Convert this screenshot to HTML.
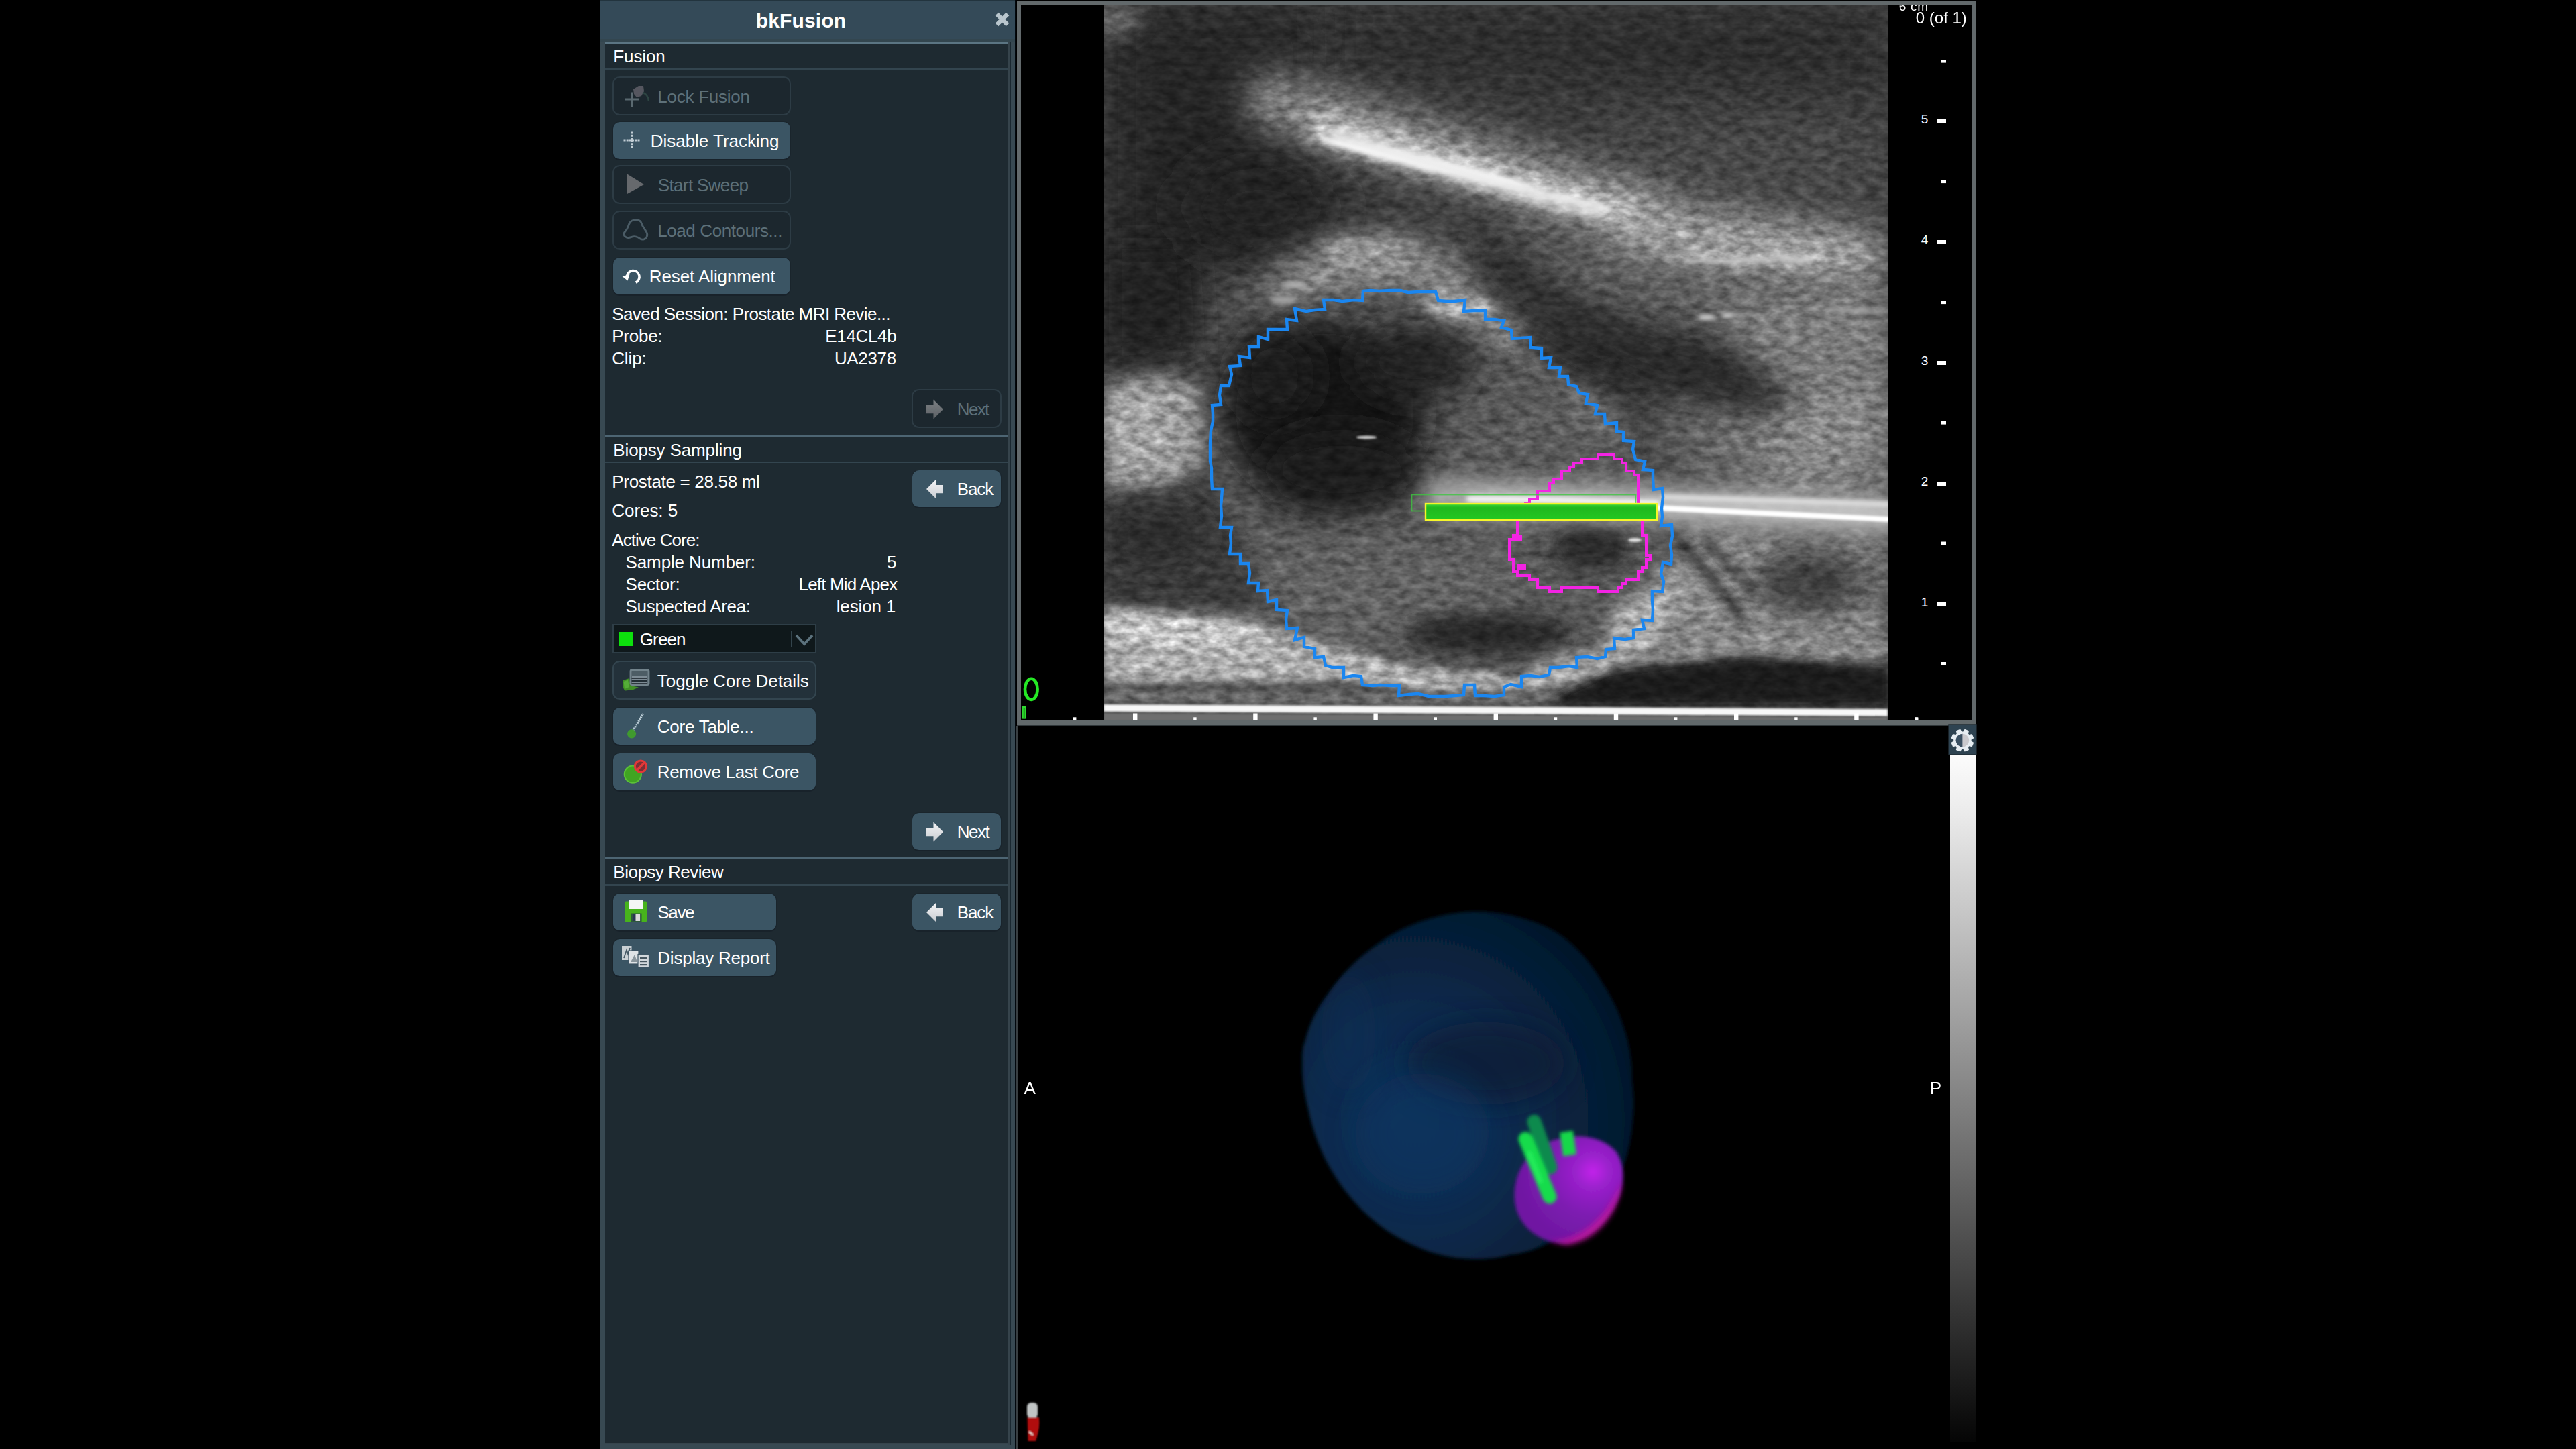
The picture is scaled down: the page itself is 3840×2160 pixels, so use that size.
<!DOCTYPE html>
<html><head><meta charset="utf-8"><title>bkFusion</title>
<style>
html,body{margin:0;padding:0;background:#000;}
body{width:3840px;height:2160px;position:relative;overflow:hidden;font-family:"Liberation Sans",sans-serif;}
.t{position:absolute;white-space:nowrap;line-height:1;}
.b{position:absolute;box-sizing:content-box;}
svg{position:absolute;overflow:visible;}
</style></head><body>
<div id="root" style="position:absolute;left:0;top:0;width:3840px;height:2160px;filter:blur(0.6px);">
<div class="b" style="left:894px;top:0px;width:619px;height:2160px;background:#384952;"></div>
<div class="b" style="left:894px;top:0px;width:619px;height:58px;background:#344a58;"></div>
<div class="b" style="left:894px;top:58px;width:619px;height:4px;background:#33464f;"></div>
<div class="b" style="left:894px;top:0px;width:619px;height:2px;background:#22343e;"></div>
<div class="b" style="left:1513px;top:0px;width:2px;height:2160px;background:#01070c;"></div>
<div class="b" style="left:902px;top:62px;width:602px;height:3px;background:#5b7583;"></div>
<div class="b" style="left:902px;top:65px;width:601px;height:2086px;background:#1e2a31;"></div>
<div class="b" style="left:1503px;top:62px;width:2px;height:2092px;background:#36444c;"></div>
<div class="b" style="left:1505px;top:62px;width:2px;height:2092px;background:#1a2830;"></div>
<div class="b" style="left:902px;top:2151px;width:603px;height:2px;background:#36444c;"></div>
<div class="t" style="left:1126.8px;top:16.1px;font-size:30px;color:#fff;letter-spacing:0.143px;font-weight:bold;">bkFusion</div>
<svg class="b" style="left:1482px;top:17px" width="24" height="24" viewBox="0 0 24 24"><path d="M4 4 L20 20 M20 4 L4 20" stroke="#b9c6cd" stroke-width="6.5" stroke-linecap="butt"/></svg>
<div class="t" style="left:914.3px;top:71.0px;font-size:26px;color:#fff;letter-spacing:-0.120px;">Fusion</div>
<div class="b" style="left:902px;top:102px;width:601px;height:2px;background:#33454f;"></div>
<div class="b" style="left:902px;top:648px;width:601px;height:3px;background:#4d6573;"></div>
<div class="t" style="left:914.3px;top:657.6px;font-size:26px;color:#fff;letter-spacing:-0.143px;">Biopsy Sampling</div>
<div class="b" style="left:902px;top:688px;width:601px;height:2px;background:#33454f;"></div>
<div class="b" style="left:902px;top:1277px;width:601px;height:3px;background:#4d6573;"></div>
<div class="t" style="left:914.3px;top:1287.3px;font-size:26px;color:#fff;letter-spacing:-0.500px;">Biopsy Review</div>
<div class="b" style="left:902px;top:1318px;width:601px;height:2px;background:#33454f;"></div>
<div class="b" style="left:913px;top:114px;width:262px;height:54px;background:#1c272e;border:2px solid #2d3c45;border-radius:11px;"></div>
<div class="t" style="left:980.2px;top:131.0px;font-size:26px;color:#5d7079;letter-spacing:-0.240px;">Lock Fusion</div>
<div class="b" style="left:913px;top:181px;width:264px;height:55px;background:#3b5564;border:1px solid #1a252c;border-bottom:2px solid #18222a;border-radius:11px;"></div>
<div class="t" style="left:969.8px;top:197.0px;font-size:26px;color:#fff;letter-spacing:-0.033px;">Disable Tracking</div>
<div class="b" style="left:913px;top:246px;width:262px;height:54px;background:#1c272e;border:2px solid #2d3c45;border-radius:11px;"></div>
<div class="t" style="left:980.8px;top:263.0px;font-size:26px;color:#5d7079;letter-spacing:-0.650px;">Start Sweep</div>
<div class="b" style="left:913px;top:314px;width:262px;height:54px;background:#1c272e;border:2px solid #2d3c45;border-radius:11px;"></div>
<div class="t" style="left:980.2px;top:331.0px;font-size:26px;color:#5d7079;letter-spacing:-0.400px;">Load Contours...</div>
<div class="b" style="left:913px;top:383px;width:264px;height:55px;background:#3b5564;border:1px solid #1a252c;border-bottom:2px solid #18222a;border-radius:11px;"></div>
<div class="t" style="left:967.8px;top:399.0px;font-size:26px;color:#fff;letter-spacing:-0.093px;">Reset Alignment</div>
<div class="t" style="left:912.2px;top:454.6px;font-size:26px;color:#fff;letter-spacing:-0.563px;">Saved Session: Prostate MRI Revie...</div>
<div class="t" style="left:912.2px;top:487.6px;font-size:26px;color:#fff;letter-spacing:-0.231px;">Probe:</div>
<div class="t" style="left:1230.3px;top:487.6px;font-size:26px;color:#fff;letter-spacing:-0.337px;">E14CL4b</div>
<div class="t" style="left:912.2px;top:520.7px;font-size:26px;color:#fff;letter-spacing:-0.114px;">Clip:</div>
<div class="t" style="left:1243.9px;top:520.7px;font-size:26px;color:#fff;letter-spacing:-0.326px;">UA2378</div>
<div class="b" style="left:1359px;top:580px;width:130px;height:54px;background:#1c272e;border:2px solid #2d3c45;border-radius:11px;"></div>
<div class="t" style="left:1426.8px;top:597.0px;font-size:26px;color:#5d7079;letter-spacing:-1.667px;">Next</div>
<div class="b" style="left:1359px;top:700px;width:132px;height:55px;background:#3b5564;border:1px solid #1a252c;border-bottom:2px solid #18222a;border-radius:11px;"></div>
<div class="t" style="left:1426.8px;top:716.0px;font-size:26px;color:#fff;letter-spacing:-1.133px;">Back</div>
<div class="t" style="left:912.3px;top:705.0px;font-size:26px;color:#fff;letter-spacing:-0.311px;">Prostate = 28.58 ml</div>
<div class="t" style="left:912.3px;top:748.0px;font-size:26px;color:#fff;letter-spacing:-0.057px;">Cores: 5</div>
<div class="t" style="left:912.3px;top:792.0px;font-size:26px;color:#fff;letter-spacing:-0.955px;">Active Core:</div>
<div class="t" style="left:932.6px;top:824.8px;font-size:26px;color:#fff;letter-spacing:-0.138px;">Sample Number:</div>
<div class="t" style="left:1322.0px;top:824.8px;font-size:26px;color:#fff;">5</div>
<div class="t" style="left:932.6px;top:857.7px;font-size:26px;color:#fff;letter-spacing:-0.216px;">Sector:</div>
<div class="t" style="left:1190.6px;top:857.7px;font-size:26px;color:#fff;letter-spacing:-0.833px;">Left Mid Apex</div>
<div class="t" style="left:932.6px;top:890.5px;font-size:26px;color:#fff;letter-spacing:-0.311px;">Suspected Area:</div>
<div class="t" style="left:1246.7px;top:890.5px;font-size:26px;color:#fff;letter-spacing:-0.143px;">lesion 1</div>
<div class="b" style="left:913px;top:930px;width:300px;height:40px;background:#0f181b;border:2px solid #2e3e47;"></div>
<div class="b" style="left:923px;top:942px;width:21px;height:21px;background:#0de00d;"></div>
<div class="t" style="left:953.8px;top:940.4px;font-size:26px;color:#fff;letter-spacing:-0.900px;">Green</div>
<div class="b" style="left:1179px;top:941px;width:2px;height:23px;background:#33444c;"></div>
<svg class="b" style="left:1184px;top:943px" width="30" height="22" viewBox="0 0 30 22"><path d="M3 4 L15 17 L27 4" fill="none" stroke="#5c727d" stroke-width="3.6"/></svg>
<div class="b" style="left:913px;top:985px;width:300px;height:54px;background:#23313a;border:2px solid #33454f;border-radius:11px;"></div>
<div class="t" style="left:979.8px;top:1002.0px;font-size:26px;color:#fff;letter-spacing:-0.056px;">Toggle Core Details</div>
<div class="b" style="left:913px;top:1054px;width:302px;height:55px;background:#3b5564;border:1px solid #1a252c;border-bottom:2px solid #18222a;border-radius:11px;"></div>
<div class="t" style="left:979.8px;top:1070.0px;font-size:26px;color:#fff;letter-spacing:-0.250px;">Core Table...</div>
<div class="b" style="left:913px;top:1122px;width:302px;height:55px;background:#3b5564;border:1px solid #1a252c;border-bottom:2px solid #18222a;border-radius:11px;"></div>
<div class="t" style="left:979.8px;top:1138.0px;font-size:26px;color:#fff;letter-spacing:-0.333px;">Remove Last Core</div>
<div class="b" style="left:1359px;top:1211px;width:132px;height:55px;background:#3b5564;border:1px solid #1a252c;border-bottom:2px solid #18222a;border-radius:11px;"></div>
<div class="t" style="left:1426.8px;top:1227.0px;font-size:26px;color:#fff;letter-spacing:-1.533px;">Next</div>
<div class="b" style="left:913px;top:1331px;width:243px;height:55px;background:#3b5564;border:1px solid #1a252c;border-bottom:2px solid #18222a;border-radius:11px;"></div>
<div class="t" style="left:980.3px;top:1347.0px;font-size:26px;color:#fff;letter-spacing:-1.333px;">Save</div>
<div class="b" style="left:1359px;top:1331px;width:132px;height:55px;background:#3b5564;border:1px solid #1a252c;border-bottom:2px solid #18222a;border-radius:11px;"></div>
<div class="t" style="left:1426.8px;top:1347.0px;font-size:26px;color:#fff;letter-spacing:-1.133px;">Back</div>
<div class="b" style="left:913px;top:1399px;width:243px;height:55px;background:#3b5564;border:1px solid #1a252c;border-bottom:2px solid #18222a;border-radius:11px;"></div>
<div class="t" style="left:980.3px;top:1415.0px;font-size:26px;color:#fff;letter-spacing:-0.231px;">Display Report</div>
<svg style="left:0;top:0" width="3840" height="2160" viewBox="0 0 3840 2160">
<defs>
<linearGradient id="arw" x1="0" y1="0" x2="0" y2="1"><stop offset="0" stop-color="#f4f4f6"/><stop offset="1" stop-color="#c9cdd2"/></linearGradient>
<linearGradient id="arwd" x1="0" y1="0" x2="0" y2="1"><stop offset="0" stop-color="#7b7f83"/><stop offset="1" stop-color="#5d6165"/></linearGradient>
<filter id="ib" x="-20%" y="-20%" width="140%" height="140%"><feGaussianBlur stdDeviation="0.7"/></filter>
</defs>
<g filter="url(#ib)">
<path d="M931 148 H952 M941.7 137.5 V160" stroke="#5a6970" stroke-width="3" fill="none"/>
<path d="M944 133 L952 128 L959 128 L960 136 L956 143 L949 145 L945 140 Z" fill="#54575f"/>
<path d="M958 138 Q966 140 967 151" stroke="#2d4442" stroke-width="2.5" fill="none"/>
<path d="M929.5 209 H954 M941.7 196.5 V221.5" stroke="#c2ced5" stroke-width="3.2" fill="none" stroke-dasharray="3 1.2"/>
<path d="M934 259 L960 275 L934 289.5 Z" fill="#66696d"/>
<path d="M944.4 328.1 Q947.3 327.5 951.1 328.1 Q954.8 328.7 956.2 332.9 Q957.7 337.0 959.8 339.9 Q961.8 342.8 963.7 346.1 Q965.6 349.4 964.3 352.7 Q963.1 356.0 959.8 356.9 Q956.5 357.7 954.0 355.8 Q951.5 354.0 948.2 353.0 Q944.9 352.1 940.7 353.6 Q936.6 355.2 933.7 354.0 Q930.8 352.7 929.9 350.2 Q929.1 347.8 932.0 344.9 Q934.9 342.0 936.4 337.4 Q937.8 332.9 939.7 330.8 Q941.5 328.7 944.4 328.1 Z" fill="none" stroke="#4b5c66" stroke-width="2.8"/>
<path d="M934.5 412.0 A9.3 9.3 0 1 1 947.7 421.2" fill="none" stroke="#fff" stroke-width="3.6"/>
<path d="M927.5 412 L938.5 409 L935.5 418.5 Z" fill="#fff"/>
</g>
<polygon points="1406.0,610.0 1391.5,595.5 1391.5,604.0 1381.0,604.0 1381.0,616.3 1391.5,616.3 1391.5,624.5" fill="url(#arwd)" filter="url(#ib)"/>
<polygon points="1381.0,729.0 1395.5,714.5 1395.5,723.0 1406.0,723.0 1406.0,735.3 1395.5,735.3 1395.5,743.5" fill="url(#arw)" filter="url(#ib)"/>
<polygon points="1406.0,1240.0 1391.5,1225.5 1391.5,1234.0 1381.0,1234.0 1381.0,1246.3 1391.5,1246.3 1391.5,1254.5" fill="url(#arw)" filter="url(#ib)"/>
<polygon points="1381.0,1360.0 1395.5,1345.5 1395.5,1354.0 1406.0,1354.0 1406.0,1366.3 1395.5,1366.3 1395.5,1374.5" fill="url(#arw)" filter="url(#ib)"/>
<g filter="url(#ib)">
<path d="M929 1014 L938 1011 L940 1022 L952 1024.5 L944 1028 L932 1029.5 Q926 1024 929 1014 Z" fill="#3f8f26"/>
<path d="M929.5 1016 L936 1013.5 L938 1024 L931 1027 Z" fill="#55ad38"/>
<rect x="940" y="998.6" width="27" height="22" rx="2" fill="#4e5d65" stroke="#72838b" stroke-width="2.8"/>
<rect x="941.5" y="1007" width="22.5" height="13" fill="#19252b"/>
<rect x="941.5" y="1007.6999999999999" width="22.5" height="2.3" fill="#7d8b94"/>
<rect x="941.5" y="1011.8" width="22.5" height="2.3" fill="#7d8b94"/>
<rect x="941.5" y="1015.9" width="22.5" height="2.3" fill="#7d8b94"/>
<path d="M943.3 1089.5 L958.6 1064.3" stroke="#bccdd6" stroke-width="3" stroke-dasharray="2.2 1"/>
<circle cx="941.6" cy="1093.8" r="6.6" fill="#3f9a2f"/>
<circle cx="943.3" cy="1154.2" r="12.6" fill="#41a524" stroke="#5cc238" stroke-width="2"/>
<circle cx="955" cy="1142.5" r="8.6" fill="#7c2f35" stroke="#e23838" stroke-width="3"/>
<path d="M949.3 1148.5 L960.8 1136.3" stroke="#e23838" stroke-width="3.4"/>
<rect x="931.5" y="1343.5" width="32.5" height="31" rx="1.5" fill="#47b31f"/>
<rect x="937" y="1342" width="21.5" height="13" fill="#f4f6f4"/>
<rect x="940" y="1361.5" width="16.5" height="13.2" fill="#2d5a3a"/>
<rect x="943" y="1363" width="4.5" height="10" fill="#2b3652"/>
<rect x="947.5" y="1363" width="6.6" height="10" fill="#d9d9d9"/>
<rect x="927" y="1410" width="14.5" height="21" fill="#c9d0d4"/>
<path d="M930 1428 L934 1416 L936 1422 L939 1413" stroke="#4a5c68" stroke-width="1.8" fill="none"/>
<rect x="937" y="1417" width="15" height="20" fill="#dfe3e6" stroke="#3c5463" stroke-width="1.2"/>
<path d="M940 1434 L946 1423 L950 1434 Z" fill="#8a969d"/>
<rect x="951" y="1422.5" width="16.5" height="19.5" fill="#d2d8dc" stroke="#3c5463" stroke-width="1.2"/>
<rect x="954" y="1427" width="11" height="2.2" fill="#46565f"/>
<rect x="954" y="1432" width="11" height="2.2" fill="#46565f"/>
<rect x="954" y="1437" width="11" height="2.2" fill="#46565f"/>
</g>
</svg>
<div class="b" style="left:1516px;top:1px;width:1418px;height:1067px;border:6px solid #62696b;background:#000;"></div>
<div class="b" style="left:1516px;top:1080px;width:1390px;height:2px;background:#30373a;"></div>
<div class="b" style="left:1515px;top:1082px;width:3px;height:1078px;background:#393f42;"></div>
<svg style="left:1645px;top:7px;overflow:hidden" width="1169" height="1067" viewBox="1645 7 1169 1067">
<defs>
<filter id="b40" filterUnits="userSpaceOnUse" x="1300" y="-300" width="1900" height="1700"><feGaussianBlur stdDeviation="40"/></filter>
<filter id="b25" filterUnits="userSpaceOnUse" x="1300" y="-300" width="1900" height="1700"><feGaussianBlur stdDeviation="25"/></filter>
<filter id="b14" filterUnits="userSpaceOnUse" x="1300" y="-300" width="1900" height="1700"><feGaussianBlur stdDeviation="14"/></filter>
<filter id="b7" filterUnits="userSpaceOnUse" x="1300" y="-300" width="1900" height="1700"><feGaussianBlur stdDeviation="7"/></filter>
<filter id="b3" filterUnits="userSpaceOnUse" x="1300" y="-300" width="1900" height="1700"><feGaussianBlur stdDeviation="3"/></filter>
<filter id="b15" filterUnits="userSpaceOnUse" x="1300" y="-300" width="1900" height="1700"><feGaussianBlur stdDeviation="1.5"/></filter>
<filter id="speck" x="0" y="0" width="100%" height="100%" color-interpolation-filters="sRGB">
  <feTurbulence type="fractalNoise" baseFrequency="0.05 0.09" numOctaves="3" seed="7" result="n"/>
  <feColorMatrix in="n" type="matrix" values="1 0 0 0 0  1 0 0 0 0  1 0 0 0 0  0 0 0 0 1" result="ng"/>
  <feComposite in="SourceGraphic" in2="ng" operator="arithmetic" k1="0.9" k2="0.55" k3="0.0" k4="0"/>
</filter>
</defs>
<g filter="url(#speck)"><rect x="1645" y="7" width="1169" height="1067" fill="#3e3e3e"/>
<polygon points="1645,7 1990,7 1960,200 1900,430 1645,540" fill="#262626" filter="url(#b40)" opacity="1"/>
<polygon points="1990,7 2814,7 2814,150 1990,120" fill="#2e2e2e" filter="url(#b40)" opacity="1"/>
<polygon points="2350,190 2814,170 2814,330 2520,330" fill="#4a4a4a" filter="url(#b40)" opacity="1"/>
<polygon points="2240,300 2814,380 2814,560 2240,520" fill="#5c5c5c" filter="url(#b40)" opacity="1"/>
<polygon points="2480,540 2814,540 2814,740 2480,735" fill="#686868" filter="url(#b40)" opacity="1"/>
<polygon points="2650,560 2814,540 2814,735 2600,730" fill="#8a8a8a" filter="url(#b40)" opacity="1"/>
<polygon points="2490,780 2814,790 2814,985 2470,990" fill="#8a8a8a" filter="url(#b25)" opacity="1"/>
<polygon points="1790,400 1900,395 1880,500 1810,560 1780,540" fill="#505050" filter="url(#b25)" opacity="1"/>
<polygon points="1645,363 1780,363 1790,520 1645,545" fill="#242424" filter="url(#b25)" opacity="1"/>
<ellipse cx="1662" cy="28" rx="40" ry="26" fill="#646464" filter="url(#b14)" opacity="1"/>
<ellipse cx="1880" cy="310" rx="120" ry="75" fill="#212121" filter="url(#b40)" opacity="1"/>
<polygon points="1890,405 1990,358 2100,355 2205,395 2218,470 2080,434 1960,452 1880,478" fill="#8a8a8a" filter="url(#b25)" opacity="1"/>
<ellipse cx="2035" cy="372" rx="65" ry="13" fill="#afafaf" filter="url(#b14)" opacity="1"/>
<polygon points="2084,440 2244,490 2335,565 2411,640 2465,718 2493,820 2453,922 2388,987 2236,1026 2084,1028 1986,990 1897,900 1830,780 1800,660 1822,575 1880,508 1970,455" fill="#585858" filter="url(#b14)" opacity="1"/>
<ellipse cx="1975" cy="615" rx="150" ry="135" fill="#181818" filter="url(#b25)" opacity="1"/>
<ellipse cx="1900" cy="560" rx="60" ry="70" fill="#1a1a1a" filter="url(#b25)" opacity="1"/>
<ellipse cx="2110" cy="540" rx="90" ry="55" fill="#242424" filter="url(#b25)" opacity="1"/>
<ellipse cx="2000" cy="700" rx="120" ry="60" fill="#1a1a1a" filter="url(#b25)" opacity="1"/>
<ellipse cx="2060" cy="880" rx="220" ry="75" fill="#626262" filter="url(#b25)" opacity="1"/>
<ellipse cx="2218" cy="945" rx="125" ry="30" fill="#282828" filter="url(#b14)" opacity="1"/>
<ellipse cx="2370" cy="815" rx="58" ry="36" fill="#2c2c2c" filter="url(#b14)" opacity="1"/>
<ellipse cx="2330" cy="640" rx="90" ry="70" fill="#5c5c5c" filter="url(#b25)" opacity="1"/>
<polyline points="2140,447 2200,464 2262,507" fill="none" stroke="#969696" stroke-width="36" stroke-linecap="round" stroke-linejoin="round" filter="url(#b14)" opacity="1"/>
<polyline points="2262,507 2340,572 2400,632" fill="none" stroke="#787878" stroke-width="26" stroke-linecap="round" stroke-linejoin="round" filter="url(#b14)" opacity="1"/>
<ellipse cx="2180" cy="457" rx="50" ry="14" fill="#afafaf" filter="url(#b7)" opacity="1"/>
<polygon points="1645,572 1730,560 1790,572 1796,690 1745,728 1645,738" fill="#969696" filter="url(#b14)" opacity="1"/>
<ellipse cx="1695" cy="640" rx="50" ry="55" fill="#afafaf" filter="url(#b25)" opacity="0.8"/>
<polygon points="1645,742 1760,735 1830,790 1870,870 1900,915 1780,905 1645,900" fill="#3a3a3a" filter="url(#b14)" opacity="1"/>
<ellipse cx="1720" cy="800" rx="75" ry="40" fill="#2c2c2c" filter="url(#b25)" opacity="1"/>
<polygon points="1645,903 1780,920 1896,938 1989,961 2082,990 2176,1001 2240,1004 2240,1016 1645,1018" fill="#acacac" filter="url(#b7)" opacity="1"/>
<ellipse cx="1760" cy="940" rx="140" ry="22" fill="#cdcdcd" filter="url(#b14)" opacity="0.8"/>
<polyline points="2020,1002 2140,1022 2260,1020 2350,1000" fill="none" stroke="#b9b9b9" stroke-width="18" stroke-linecap="round" stroke-linejoin="round" filter="url(#b7)" opacity="1"/>
<polyline points="2300,1010 2400,985 2460,935 2490,870" fill="none" stroke="#aaaaaa" stroke-width="40" stroke-linecap="round" stroke-linejoin="round" filter="url(#b14)" opacity="1"/>
<ellipse cx="2440" cy="930" rx="38" ry="50" fill="#b9b9b9" filter="url(#b14)" opacity="0.8" transform="rotate(30 2440 930)"/>
<ellipse cx="2700" cy="868" rx="90" ry="52" fill="#3c3c3c" filter="url(#b25)" opacity="1"/>
<polyline points="2500,800 2560,870 2600,930" fill="none" stroke="#373737" stroke-width="16" stroke-linecap="round" stroke-linejoin="round" filter="url(#b7)" opacity="1"/>
<polyline points="2540,800 2610,880" fill="none" stroke="#414141" stroke-width="12" stroke-linecap="round" stroke-linejoin="round" filter="url(#b7)" opacity="1"/>
<polygon points="2480,955 2600,930 2814,945 2814,990 2600,975 2420,1000" fill="#878787" filter="url(#b14)" opacity="1"/>
<polygon points="2330,1034 2400,1002 2600,980 2814,994 2814,1050 2300,1050" fill="#1e1e1e" filter="url(#b7)" opacity="1"/>
<polygon points="1645,1024 2320,1036 2320,1052 1645,1048" fill="#6e6e6e" filter="url(#b7)" opacity="1"/>
<polyline points="1900,150 2100,212 2300,270 2440,312" fill="none" stroke="#828282" stroke-width="90" stroke-linecap="round" stroke-linejoin="round" filter="url(#b25)" opacity="1"/>
<polyline points="1965,188 2120,232 2300,284 2430,318" fill="none" stroke="#c3c3c3" stroke-width="40" stroke-linecap="round" stroke-linejoin="round" filter="url(#b14)" opacity="1"/>
<polyline points="2440,338 2600,362 2770,383" fill="none" stroke="#a0a0a0" stroke-width="80" stroke-linecap="round" stroke-linejoin="round" filter="url(#b25)" opacity="1"/>
<polyline points="2510,380 2620,384 2720,386" fill="none" stroke="#afafaf" stroke-width="16" stroke-linecap="round" stroke-linejoin="round" filter="url(#b7)" opacity="1"/>
<polygon points="2280,470 2420,500 2620,520 2620,590 2380,575 2270,520" fill="#282828" filter="url(#b25)" opacity="1"/>
<polyline points="2222,385 2330,468 2480,538 2640,582" fill="none" stroke="#2c2c2c" stroke-width="64" stroke-linecap="round" stroke-linejoin="round" filter="url(#b25)" opacity="1"/>
<polygon points="2560,440 2814,430 2814,560 2660,560 2590,520" fill="#7d7d7d" filter="url(#b25)" opacity="1"/>
</g>
<ellipse cx="2125" cy="243" rx="165" ry="8.5" fill="#ffffff" filter="url(#b3)" opacity="1" transform="rotate(13.2 2125 243)"/>
<polyline points="1990,203 2120,240 2240,275 2400,312" fill="none" stroke="#ebebeb" stroke-width="7" stroke-linecap="round" stroke-linejoin="round" filter="url(#b3)" opacity="0.8"/>
<polyline points="1995,200 2120,240 2300,292 2380,313" fill="none" stroke="#ebebeb" stroke-width="24" stroke-linecap="round" stroke-linejoin="round" filter="url(#b7)" opacity="0.7"/>
<polyline points="2520,389 2620,388 2700,386" fill="none" stroke="#c8c8c8" stroke-width="6" stroke-linecap="round" stroke-linejoin="round" filter="url(#b3)" opacity="0.9"/>
<polyline points="2640,378 2700,392" fill="none" stroke="#c8c8c8" stroke-width="5" stroke-linecap="round" stroke-linejoin="round" filter="url(#b3)" opacity="0.8"/>
<ellipse cx="1930" cy="425" rx="18" ry="5" fill="#afafaf" filter="url(#b3)" opacity="1"/>
<ellipse cx="1912" cy="447" rx="20" ry="5" fill="#a5a5a5" filter="url(#b3)" opacity="1"/>
<ellipse cx="2545" cy="473" rx="14" ry="4" fill="#d7d7d7" filter="url(#b3)" opacity="1"/>
<ellipse cx="2575" cy="470" rx="10" ry="4" fill="#cdcdcd" filter="url(#b3)" opacity="1"/>
<polyline points="2725,461 2805,465" fill="none" stroke="#afafaf" stroke-width="4" stroke-linecap="round" stroke-linejoin="round" filter="url(#b3)" opacity="1"/>
<ellipse cx="2037" cy="652" rx="15" ry="2.6" fill="#cdcdcd" filter="url(#b15)" opacity="1"/>
<ellipse cx="2437" cy="805" rx="10" ry="3" fill="#e1e1e1" filter="url(#b15)" opacity="1"/>
<polyline points="2150,742 2480,752 2814,768" fill="none" stroke="#c3c3c3" stroke-width="60" stroke-linecap="round" stroke-linejoin="round" filter="url(#b14)" opacity="0.72"/>
<polyline points="2200,744 2480,753 2814,766" fill="none" stroke="#d7d7d7" stroke-width="24" stroke-linecap="round" stroke-linejoin="round" filter="url(#b7)" opacity="0.55"/>
<polyline points="2190,744 2300,745 2470,750" fill="none" stroke="#fafafa" stroke-width="8" stroke-linecap="round" stroke-linejoin="round" filter="url(#b3)" opacity="1"/>
<polyline points="2470,757 2814,774" fill="none" stroke="#ffffff" stroke-width="8" stroke-linecap="round" stroke-linejoin="round" filter="url(#b15)" opacity="1"/>
<polyline points="2480,741 2814,752" fill="none" stroke="#e1e1e1" stroke-width="8" stroke-linecap="round" stroke-linejoin="round" filter="url(#b3)" opacity="1"/>
<polygon points="1645,1050 2814,1057 2814,1068 1645,1061" fill="#f8f8f8" filter="url(#b15)" opacity="1"/>
<polygon points="1645,1063 2814,1069 2814,1075 1645,1075" fill="#6e6e6e" filter="url(#b15)" opacity="1"/>
</svg>
<svg style="left:0;top:0" width="3840" height="2160" viewBox="0 0 3840 2160">
<polygon points="2087,433 2099,436 2114,435 2128,435 2140,435 2144,448 2157,449 2168,449 2184,447 2182,464 2198,463 2214,463 2214,476 2227,476 2242,478 2238,488 2253,492 2254,505 2267,504 2281,503 2282,518 2298,519 2298,534 2312,533 2309,548 2326,548 2324,561 2337,561 2338,573 2350,576 2354,586 2367,588 2364,601 2381,604 2378,617 2392,617 2393,632 2410,630 2410,643 2420,644 2420,657 2436,658 2434,670 2438,685 2452,688 2449,700 2464,701 2464,714 2465,730 2478,728 2479,741 2477,758 2478,770 2476,784 2492,782 2493,799 2490,813 2492,827 2491,841 2479,838 2476,855 2480,867 2478,882 2463,881 2463,895 2464,909 2463,925 2448,924 2451,937 2435,939 2435,951 2422,953 2406,951 2407,967 2394,968 2393,979 2381,982 2366,979 2350,980 2351,995 2339,993 2323,995 2311,995 2309,1006 2295,1009 2281,1007 2268,1008 2268,1024 2252,1020 2242,1024 2242,1036 2228,1038 2211,1037 2199,1037 2198,1021 2183,1021 2182,1036 2169,1037 2154,1038 2143,1038 2130,1038 2114,1034 2101,1035 2085,1037 2086,1022 2074,1022 2057,1021 2046,1022 2031,1021 2029,1008 2017,1007 2003,1010 2003,995 1986,995 1976,992 1973,979 1960,980 1960,967 1944,964 1944,950 1930,954 1934,936 1918,937 1917,923 1919,910 1903,909 1903,894 1890,897 1889,880 1875,881 1876,869 1861,869 1863,854 1861,840 1849,840 1849,826 1833,826 1835,810 1834,798 1836,786 1819,786 1821,769 1820,754 1821,743 1822,729 1807,729 1806,712 1806,698 1804,687 1804,670 1804,660 1805,642 1808,628 1808,617 1807,604 1820,603 1818,589 1820,575 1832,575 1836,558 1833,546 1849,545 1847,531 1863,533 1862,517 1876,517 1876,502 1890,506 1890,491 1903,491 1919,491 1918,476 1933,478 1930,460 1947,464 1960,462 1975,461 1973,447 1988,447 2001,449 2018,447 2031,448 2032,434 2043,433 2056,434 2071,433 2085,433" fill="none" stroke="#1a86f0" stroke-width="4.4" stroke-linejoin="miter"/>
<polygon points="2394,678 2400,678 2406,678 2406,684 2412,684 2418,684 2418,690 2424,690 2424,696 2424,702 2430,702 2436,702 2436,708 2442,708 2442,714 2442,720 2442,726 2442,732 2442,738 2442,744 2442,750 2442,756 2442,762 2448,762 2448,768 2448,774 2448,780 2448,786 2448,792 2448,798 2454,798 2454,804 2454,810 2454,816 2454,822 2454,828 2460,828 2460,834 2454,834 2454,840 2454,846 2448,846 2448,852 2442,852 2442,858 2442,864 2436,864 2430,864 2424,864 2424,870 2418,870 2418,876 2412,876 2412,882 2406,882 2400,882 2394,882 2388,882 2382,882 2382,876 2376,876 2370,876 2364,876 2358,876 2352,876 2346,876 2340,876 2334,876 2328,876 2328,882 2322,882 2316,882 2310,882 2310,876 2304,876 2298,876 2292,876 2292,870 2292,864 2286,864 2280,864 2280,858 2274,858 2268,858 2262,858 2262,852 2256,852 2256,846 2256,840 2256,834 2250,834 2250,828 2250,822 2250,816 2250,810 2250,804 2256,804 2256,798 2262,798 2262,792 2262,786 2262,780 2262,774 2268,774 2268,768 2274,768 2274,762 2274,756 2274,750 2280,750 2280,744 2286,744 2292,744 2292,738 2292,732 2298,732 2304,732 2310,732 2310,726 2310,720 2316,720 2316,714 2322,714 2328,714 2328,708 2328,702 2334,702 2340,702 2340,696 2346,696 2346,690 2352,690 2358,690 2358,684 2364,684 2370,684 2376,684 2382,684 2382,678 2388,678" fill="none" stroke="#f323e3" stroke-width="4" stroke-linejoin="miter"/>
<rect x="2255" y="798" width="14" height="9" fill="#f323e3"/>
<rect x="2261" y="841" width="14" height="9" fill="#f323e3"/>
<rect x="2269" y="765" width="14" height="9" fill="#f323e3"/>
<rect x="2104.5" y="737.5" width="334" height="24" fill="none" stroke="#3fc641" stroke-width="1.8" opacity="0.8"/>
<defs><linearGradient id="gbar" x1="0" y1="0" x2="0" y2="1"><stop offset="0" stop-color="#3fd83a"/><stop offset="0.25" stop-color="#1fb81e"/><stop offset="1" stop-color="#22c822"/></linearGradient></defs>
<rect x="2125" y="751" width="345" height="24" fill="url(#gbar)" stroke="#f6f62a" stroke-width="2.4"/>
<rect x="2888" y="178" width="13" height="6" fill="#fff"/>
<rect x="2888" y="358" width="13" height="6" fill="#fff"/>
<rect x="2888" y="538" width="13" height="6" fill="#fff"/>
<rect x="2888" y="718" width="13" height="6" fill="#fff"/>
<rect x="2888" y="898" width="13" height="6" fill="#fff"/>
<rect x="2894" y="89" width="7" height="4.6" fill="#fff"/>
<rect x="2894" y="268.5" width="7" height="4.6" fill="#fff"/>
<rect x="2894" y="448.5" width="7" height="4.6" fill="#fff"/>
<rect x="2894" y="628" width="7" height="4.6" fill="#fff"/>
<rect x="2894" y="807.5" width="7" height="4.6" fill="#fff"/>
<rect x="2894" y="987" width="7" height="4.6" fill="#fff"/>
<rect x="1689.0" y="1063.5" width="6.4" height="10.5" fill="#fff"/>
<rect x="1868.2" y="1063.5" width="6.4" height="10.5" fill="#fff"/>
<rect x="2047.4" y="1063.5" width="6.4" height="10.5" fill="#fff"/>
<rect x="2226.6" y="1063.5" width="6.4" height="10.5" fill="#fff"/>
<rect x="2405.8" y="1063.5" width="6.4" height="10.5" fill="#fff"/>
<rect x="2585.0" y="1063.5" width="6.4" height="10.5" fill="#fff"/>
<rect x="2764.2" y="1063.5" width="6.4" height="10.5" fill="#fff"/>
<rect x="1600.0" y="1069.3" width="4.4" height="4.7" fill="#fff"/>
<rect x="1779.2" y="1069.3" width="4.4" height="4.7" fill="#fff"/>
<rect x="1958.4" y="1069.3" width="4.4" height="4.7" fill="#fff"/>
<rect x="2137.6" y="1069.3" width="4.4" height="4.7" fill="#fff"/>
<rect x="2316.8" y="1069.3" width="4.4" height="4.7" fill="#fff"/>
<rect x="2496.0" y="1069.3" width="4.4" height="4.7" fill="#fff"/>
<rect x="2675.2" y="1069.3" width="4.4" height="4.7" fill="#fff"/>
<rect x="2854.4" y="1069.3" width="4.4" height="4.7" fill="#fff"/>
<rect x="2855" y="1069.5" width="4.5" height="4.5" fill="#fff"/>
<ellipse cx="1537.3" cy="1027.3" rx="9.3" ry="15.6" fill="none" stroke="#25e825" stroke-width="4.6"/>
<rect x="1523.5" y="1053" width="6.3" height="18.6" fill="#2fd92f"/><rect x="1525.8" y="1055" width="1.8" height="15" fill="#138a13"/>
<defs>
<radialGradient id="bl1" cx="0.34" cy="0.6" r="0.66"><stop offset="0" stop-color="#0c3159"/><stop offset="0.45" stop-color="#0a2b4e"/><stop offset="0.75" stop-color="#07213c"/><stop offset="1" stop-color="#04182c"/></radialGradient>
<radialGradient id="pu1" cx="0.72" cy="0.33" r="0.7"><stop offset="0" stop-color="#c222ea"/><stop offset="0.22" stop-color="#9a20cc"/><stop offset="0.6" stop-color="#7c1cb0"/><stop offset="1" stop-color="#6f18a2"/></radialGradient>
<filter id="f3" filterUnits="userSpaceOnUse" x="1900" y="1300" width="600" height="640"><feGaussianBlur stdDeviation="2.5"/></filter>
<filter id="f3b" x="-30%" y="-30%" width="160%" height="160%"><feGaussianBlur stdDeviation="22"/></filter>
<filter id="f3c" filterUnits="userSpaceOnUse" x="1900" y="1300" width="600" height="640"><feGaussianBlur stdDeviation="4"/></filter>
<clipPath id="blobclip"><path id="blobp" d="M2189.8 1359.3 C2235 1357 2278 1368 2314 1386.2 C2345 1404 2370 1432 2388.5 1464.9 C2405 1490 2415 1512 2421.6 1535.3 C2430 1560 2433 1585 2433 1609.8 C2436 1632 2436 1652 2434 1671.9 C2432 1695 2428 1715 2421.6 1734 C2400 1790 2360 1830 2310 1852 C2290 1863 2272 1868 2251.9 1870.6 C2232 1876 2211 1878 2189.8 1876.8 C2170 1876 2150 1872 2131.8 1866.5 C2108 1858 2086 1847 2065.6 1833.3 C2036 1812 2011 1786 1991 1754.7 C1970 1722 1957 1688 1949.7 1651 C1944 1628 1941 1607 1941.4 1585 C1941 1570 1942 1560 1945.5 1552 C1952 1525 1965 1500 1982.8 1477.3 C2005 1446 2033 1420 2065.6 1398.7 C2103 1376 2145 1362 2189.8 1359.3 Z"/></clipPath>
</defs>
<path d="M2189.8 1359.3 C2235 1357 2278 1368 2314 1386.2 C2345 1404 2370 1432 2388.5 1464.9 C2405 1490 2415 1512 2421.6 1535.3 C2430 1560 2433 1585 2433 1609.8 C2436 1632 2436 1652 2434 1671.9 C2432 1695 2428 1715 2421.6 1734 C2400 1790 2360 1830 2310 1852 C2290 1863 2272 1868 2251.9 1870.6 C2232 1876 2211 1878 2189.8 1876.8 C2170 1876 2150 1872 2131.8 1866.5 C2108 1858 2086 1847 2065.6 1833.3 C2036 1812 2011 1786 1991 1754.7 C1970 1722 1957 1688 1949.7 1651 C1944 1628 1941 1607 1941.4 1585 C1941 1570 1942 1560 1945.5 1552 C1952 1525 1965 1500 1982.8 1477.3 C2005 1446 2033 1420 2065.6 1398.7 C2103 1376 2145 1362 2189.8 1359.3 Z" fill="url(#bl1)" filter="url(#f3)"/>
<g clip-path="url(#blobclip)">
<ellipse cx="2215" cy="1585" rx="120" ry="62" fill="#071c36" filter="url(#f3b)" opacity="0.75"/>
<ellipse cx="2120" cy="1690" rx="100" ry="90" fill="#0d3461" filter="url(#f3b)" opacity="0.6"/>
<ellipse cx="2010" cy="1540" rx="40" ry="90" fill="#0c3058" filter="url(#f3b)" opacity="0.4"/>
</g>
<path d="M2258 1790 C2255 1750 2275 1715 2315 1700 C2350 1688 2390 1694 2410 1718 C2424 1740 2422 1770 2408 1795 C2392 1825 2365 1848 2335 1853 C2300 1856 2262 1830 2258 1790 Z" fill="url(#pu1)" filter="url(#f3)"/>
<path d="M2300 1848 C2345 1858 2395 1820 2418 1760 C2416 1800 2385 1850 2335 1856 Z" fill="#c0129e" filter="url(#f3c)" opacity="0.9"/>
<g filter="url(#f3)">
<path d="M2287 1672 L2311 1740" stroke="#118a4e" stroke-width="21" stroke-linecap="round"/>
<path d="M2274 1698 L2310 1784" stroke="#12dc4c" stroke-width="21" stroke-linecap="round"/>
<path d="M2280 1720 L2296 1760" stroke="#2af060" stroke-width="8" stroke-linecap="round" opacity="0.7"/>
<path d="M2335 1687 L2340 1722" stroke="#12d848" stroke-width="20" stroke-linecap="butt"/>
</g>
<g filter="url(#ib2)"><defs><filter id="ib2"><feGaussianBlur stdDeviation="1"/></filter></defs>
<rect x="1531" y="2091" width="16" height="23" rx="6" fill="#c1c5c5"/>
<path d="M1531.5 2113 L1549 2113 Q1551 2128 1544 2148 L1532.5 2148 Z" fill="#b00d0d"/>
<path d="M1534 2134 L1540 2139" stroke="#e8d8d0" stroke-width="2.5"/>
</g>
<defs><linearGradient id="gbw" x1="0" y1="0" x2="0" y2="1"><stop offset="0" stop-color="#fcfcfc"/><stop offset="0.08" stop-color="#ececec"/><stop offset="1" stop-color="#050505"/></linearGradient></defs>
<rect x="2907" y="1125" width="39" height="1024" fill="url(#gbw)"/>
<rect x="2905" y="1080" width="41" height="45" fill="#2e4351" stroke="#202d35" stroke-width="1.5"/>
<path d="M2942.3 1106.9 L2939.7 1113.2 L2935.4 1112.2 L2934.0 1113.6 L2935.0 1117.9 L2928.7 1120.5 L2926.4 1116.8 L2924.4 1116.8 L2922.1 1120.5 L2915.8 1117.9 L2916.8 1113.6 L2915.4 1112.2 L2911.1 1113.2 L2908.5 1106.9 L2912.2 1104.6 L2912.2 1102.6 L2908.5 1100.3 L2911.1 1094.0 L2915.4 1095.0 L2916.8 1093.6 L2915.8 1089.3 L2922.1 1086.7 L2924.4 1090.4 L2926.4 1090.4 L2928.7 1086.7 L2935.0 1089.3 L2934.0 1093.6 L2935.4 1095.0 L2939.7 1094.0 L2942.3 1100.3 L2938.6 1102.6 L2938.6 1104.6 Z" fill="#e6edf2" filter="url(#ib)"/>
<circle cx="2925.4" cy="1103.6" r="9.8" fill="#c9c9cd"/>
<path d="M2925.4 1093.8 A9.8 9.8 0 0 0 2925.4 1113.3999999999999 Z" fill="#3a5062"/>
</svg>
<div class="t" style="left:2830.8px;top:0.3px;font-size:19px;color:#fff;letter-spacing:0.667px;">6 cm</div>
<div class="b" style="left:2826px;top:1px;width:60px;height:6px;background:#62696b;"></div>
<div class="t" style="left:2855.8px;top:14.5px;font-size:24px;color:#fff;">0 (of 1)</div>
<div class="t" style="left:2863.8px;top:167.9px;font-size:19px;color:#fff;">5</div>
<div class="t" style="left:2863.8px;top:347.9px;font-size:19px;color:#fff;">4</div>
<div class="t" style="left:2863.8px;top:527.9px;font-size:19px;color:#fff;">3</div>
<div class="t" style="left:2863.8px;top:707.9px;font-size:19px;color:#fff;">2</div>
<div class="t" style="left:2863.8px;top:887.9px;font-size:19px;color:#fff;">1</div>
<div class="t" style="left:1526.5px;top:1609.0px;font-size:26px;color:#fff;">A</div>
<div class="t" style="left:2876.8px;top:1609.0px;font-size:26px;color:#fff;">P</div>
</div>
</body></html>
